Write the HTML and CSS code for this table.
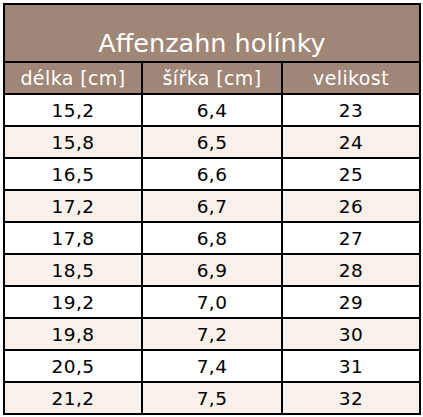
FILE: index.html
```html
<!DOCTYPE html>
<html lang="cs">
<head>
<meta charset="utf-8">
<link rel="stylesheet" href="styles.css">
</head>
<body>
<div class="sheet">
  <div class="title">Affenzahn holínky</div>
  <div class="head">délka [cm]</div>
  <div class="head">šířka [cm]</div>
  <div class="head">velikost</div>

  <div class="cell">15,2</div><div class="cell">6,4</div><div class="cell">23</div>
  <div class="cell alt">15,8</div><div class="cell alt">6,5</div><div class="cell alt">24</div>
  <div class="cell">16,5</div><div class="cell">6,6</div><div class="cell">25</div>
  <div class="cell alt">17,2</div><div class="cell alt">6,7</div><div class="cell alt">26</div>
  <div class="cell">17,8</div><div class="cell">6,8</div><div class="cell">27</div>
  <div class="cell alt">18,5</div><div class="cell alt">6,9</div><div class="cell alt">28</div>
  <div class="cell">19,2</div><div class="cell">7,0</div><div class="cell">29</div>
  <div class="cell alt">19,8</div><div class="cell alt">7,2</div><div class="cell alt">30</div>
  <div class="cell">20,5</div><div class="cell">7,4</div><div class="cell">31</div>
  <div class="cell alt">21,2</div><div class="cell alt">7,5</div><div class="cell alt">32</div>
</div>
</body>
</html>
```

FILE: styles.css
```css
html, body {
  margin: 0;
  padding: 0;
  background: #ffffff;
}
body {
  padding: 3px 0 0 3px;
  font-family: "DejaVu Sans", Verdana, sans-serif;
}
.sheet {
  display: grid;
  width: 418px;
  box-sizing: border-box;
  grid-template-columns: 136px 138px 136px;
  grid-template-rows: 56px 30px repeat(10, 30px);
  gap: 2px;
  padding: 2px;
  background: #000000;
}
.title {
  grid-column: 1 / 4;
  background: #a08676;
  color: #ffffff;
  font-size: 25.5px;
  display: flex;
  align-items: flex-end;
  justify-content: center;
  padding-bottom: 3px;
  box-sizing: border-box;
}
.head {
  background: #a08676;
  color: #ffffff;
  font-size: 19px;
  letter-spacing: 0.4px;
  display: flex;
  align-items: center;
  justify-content: center;
}
.cell {
  background: #ffffff;
  color: #000000;
  font-size: 18.5px;
  letter-spacing: 0.4px;
  display: flex;
  align-items: center;
  justify-content: center;
}
.cell.alt {
  background: #f8f0ea;
}
```
